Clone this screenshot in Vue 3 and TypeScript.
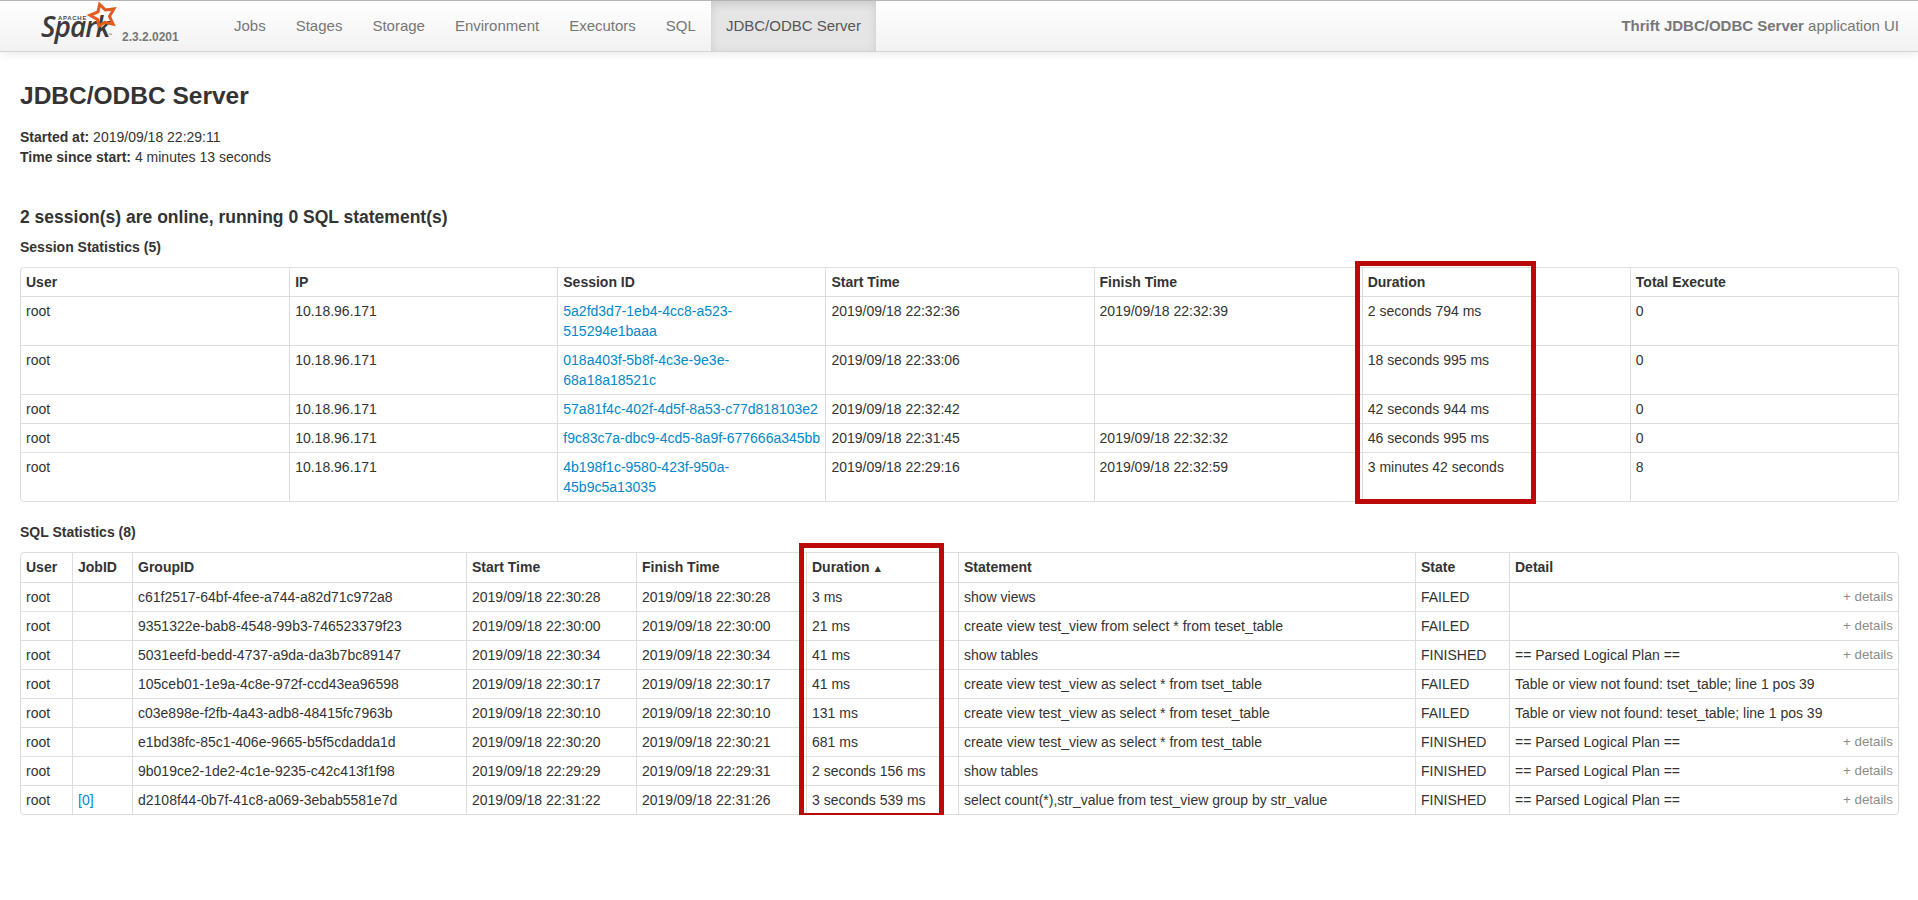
<script setup lang="ts">
interface SessionRow { user: string; ip: string; id: string; start: string; finish: string; duration: string; total: string }
interface SqlRow { user: string; job: string; group: string; start: string; finish: string; duration: string; statement: string; state: string; detail: string; more: boolean }

const navItems: string[] = ['Jobs', 'Stages', 'Storage', 'Environment', 'Executors', 'SQL']

const sessions: SessionRow[] = [
  { user: 'root', ip: '10.18.96.171', id: '5a2fd3d7-1eb4-4cc8-a523-515294e1baaa', start: '2019/09/18 22:32:36', finish: '2019/09/18 22:32:39', duration: '2 seconds 794 ms', total: '0' },
  { user: 'root', ip: '10.18.96.171', id: '018a403f-5b8f-4c3e-9e3e-68a18a18521c', start: '2019/09/18 22:33:06', finish: '', duration: '18 seconds 995 ms', total: '0' },
  { user: 'root', ip: '10.18.96.171', id: '57a81f4c-402f-4d5f-8a53-c77d818103e2', start: '2019/09/18 22:32:42', finish: '', duration: '42 seconds 944 ms', total: '0' },
  { user: 'root', ip: '10.18.96.171', id: 'f9c83c7a-dbc9-4cd5-8a9f-677666a345bb', start: '2019/09/18 22:31:45', finish: '2019/09/18 22:32:32', duration: '46 seconds 995 ms', total: '0' },
  { user: 'root', ip: '10.18.96.171', id: '4b198f1c-9580-423f-950a-45b9c5a13035', start: '2019/09/18 22:29:16', finish: '2019/09/18 22:32:59', duration: '3 minutes 42 seconds', total: '8' }
]

const plan = '== Parsed Logical Plan =='
const sqlRows: SqlRow[] = [
  { user: 'root', job: '', group: 'c61f2517-64bf-4fee-a744-a82d71c972a8', start: '2019/09/18 22:30:28', finish: '2019/09/18 22:30:28', duration: '3 ms', statement: 'show views', state: 'FAILED', detail: '', more: true },
  { user: 'root', job: '', group: '9351322e-bab8-4548-99b3-746523379f23', start: '2019/09/18 22:30:00', finish: '2019/09/18 22:30:00', duration: '21 ms', statement: 'create view test_view from select * from teset_table', state: 'FAILED', detail: '', more: true },
  { user: 'root', job: '', group: '5031eefd-bedd-4737-a9da-da3b7bc89147', start: '2019/09/18 22:30:34', finish: '2019/09/18 22:30:34', duration: '41 ms', statement: 'show tables', state: 'FINISHED', detail: plan, more: true },
  { user: 'root', job: '', group: '105ceb01-1e9a-4c8e-972f-ccd43ea96598', start: '2019/09/18 22:30:17', finish: '2019/09/18 22:30:17', duration: '41 ms', statement: 'create view test_view as select * from tset_table', state: 'FAILED', detail: 'Table or view not found: tset_table; line 1 pos 39', more: false },
  { user: 'root', job: '', group: 'c03e898e-f2fb-4a43-adb8-48415fc7963b', start: '2019/09/18 22:30:10', finish: '2019/09/18 22:30:10', duration: '131 ms', statement: 'create view test_view as select * from teset_table', state: 'FAILED', detail: 'Table or view not found: teset_table; line 1 pos 39', more: false },
  { user: 'root', job: '', group: 'e1bd38fc-85c1-406e-9665-b5f5cdadda1d', start: '2019/09/18 22:30:20', finish: '2019/09/18 22:30:21', duration: '681 ms', statement: 'create view test_view as select * from test_table', state: 'FINISHED', detail: plan, more: true },
  { user: 'root', job: '', group: '9b019ce2-1de2-4c1e-9235-c42c413f1f98', start: '2019/09/18 22:29:29', finish: '2019/09/18 22:29:31', duration: '2 seconds 156 ms', statement: 'show tables', state: 'FINISHED', detail: plan, more: true },
  { user: 'root', job: '[0]', group: 'd2108f44-0b7f-41c8-a069-3ebab5581e7d', start: '2019/09/18 22:31:22', finish: '2019/09/18 22:31:26', duration: '3 seconds 539 ms', statement: 'select count(*),str_value from test_view group by str_value', state: 'FINISHED', detail: plan, more: true }
]
</script>

<template>
  <div class="page">
    <header class="navbar">
      <div class="brand">
        <div class="logo">
          <span class="spark">Spark</span>
          <span class="apache">APACHE</span>
          <svg class="star" width="34" height="32" viewBox="0 0 34 32">
            <path d="M13.6 3.4 L19.3 8.9 L27.9 7.9 L23.5 15.3 L27.1 23.2 L18.7 21.3 L12.8 25 L11.5 18.5 L4 14.3 L12 10.9 Z" fill="none" stroke="#e25a1c" stroke-width="3" stroke-linejoin="miter" />
          </svg>
          <span class="tm">™</span>
        </div>
        <span class="version">2.3.2.0201</span>
      </div>
      <nav class="nav">
        <a v-for="item in navItems" :key="item" class="nav-link">{{ item }}</a>
        <a class="nav-link active">JDBC/ODBC Server</a>
      </nav>
      <p class="app-name"><strong>Thrift JDBC/ODBC Server</strong> application UI</p>
    </header>

    <main class="content">
      <h3 class="title">JDBC/ODBC Server</h3>
      <ul class="facts">
        <li><strong>Started at:</strong> 2019/09/18 22:29:11</li>
        <li><strong>Time since start:</strong> 4 minutes 13 seconds</li>
      </ul>

      <h4 class="online">2 session(s) are online, running 0 SQL statement(s)</h4>

      <h5 class="section">Session Statistics (5)</h5>
      <div class="table-wrap">
        <table class="grid fixed">
          <thead>
            <tr>
              <th>User</th><th>IP</th><th>Session ID</th><th>Start Time</th><th>Finish Time</th><th>Duration</th><th>Total Execute</th>
            </tr>
          </thead>
          <tbody>
            <tr v-for="row in sessions" :key="row.id">
              <td>{{ row.user }}</td>
              <td>{{ row.ip }}</td>
              <td><a class="link">{{ row.id }}</a></td>
              <td>{{ row.start }}</td>
              <td>{{ row.finish }}</td>
              <td>{{ row.duration }}</td>
              <td>{{ row.total }}</td>
            </tr>
          </tbody>
        </table>
        <div class="marker marker-session"></div>
      </div>

      <h5 class="section sql">SQL Statistics (8)</h5>
      <div class="table-wrap">
        <table class="grid fixed">
          <colgroup>
            <col class="c-user" /><col class="c-job" /><col class="c-group" /><col class="c-time" /><col class="c-time2" /><col class="c-dur" /><col class="c-stmt" /><col class="c-state" /><col />
          </colgroup>
          <thead>
            <tr>
              <th>User</th><th>JobID</th><th>GroupID</th><th>Start Time</th><th>Finish Time</th>
              <th>Duration <span class="sort">▴</span></th>
              <th>Statement</th><th>State</th><th>Detail</th>
            </tr>
          </thead>
          <tbody>
            <tr v-for="row in sqlRows" :key="row.group">
              <td>{{ row.user }}</td>
              <td><a v-if="row.job" class="link">{{ row.job }}</a></td>
              <td>{{ row.group }}</td>
              <td>{{ row.start }}</td>
              <td>{{ row.finish }}</td>
              <td>{{ row.duration }}</td>
              <td>{{ row.statement }}</td>
              <td>{{ row.state }}</td>
              <td>
                <span v-if="row.more" class="details">+ details</span>{{ row.detail }}
              </td>
            </tr>
          </tbody>
        </table>
        <div class="marker marker-sql"></div>
      </div>
    </main>
  </div>
</template>

<style>
html, body { background: #fff; }
</style>

<style scoped>
.page {
  font-family: "Liberation Sans", Arial, sans-serif;
  font-size: 14px;
  line-height: 20px;
  color: #333;
}
.navbar {
  display: flex;
  align-items: stretch;
  height: 50px;
  background: linear-gradient(to bottom, #fff, #f2f2f2);
  border-top: 1px solid #b5b5b5;
  border-bottom: 1px solid #d4d4d4;
  box-shadow: 0 1px 10px rgba(0, 0, 0, 0.1);
}
.brand {
  display: flex;
  width: 219px;
  flex: none;
  padding-left: 40px;
  box-sizing: border-box;
}
.logo {
  position: relative;
  width: 80px;
  height: 50px;
  flex: none;
}
.star { position: absolute; left: 46px; top: 0; }
.apache {
  position: absolute;
  left: 18px;
  top: 14px;
  font-size: 6px;
  line-height: 7px;
  font-weight: 700;
  letter-spacing: 0.7px;
  color: #4a4a4a;
}
.spark {
  position: absolute;
  left: 1px;
  top: 14px;
  font-family: "Open Sans", sans-serif;
  font-size: 28px;
  line-height: 22px;
  font-weight: 600;
  font-style: italic;
  letter-spacing: -1px;
  color: #3c3a3a;
}
.tm {
  position: absolute;
  left: 68px;
  top: 31px;
  font-size: 4px;
  line-height: 5px;
  color: #555;
}
.version {
  margin: 26px 0 0 2px;
  font-size: 12px;
  font-weight: 700;
  color: #777;
}
.nav { display: flex; }
.nav-link {
  padding: 0 15px;
  font-size: 15px;
  line-height: 50px;
  color: #777;
}
.nav-link.active {
  color: #555;
  background: #e5e5e5;
  box-shadow: inset 0 3px 8px rgba(0, 0, 0, 0.125);
}
.app-name {
  margin: 0 19px 0 auto;
  font-size: 15px;
  line-height: 50px;
  color: #777;
}
.content { padding: 0 19px 0 20px; }
.title {
  margin: 24px 0 11px;
  font-size: 24.5px;
  line-height: 40px;
  font-weight: 700;
}
.facts { list-style: none; margin: 0; padding: 0; }
.online {
  margin: 40px 0 10px;
  font-size: 17.5px;
  line-height: 20px;
  font-weight: 700;
}
.section {
  margin: 0 0 10px;
  font-size: 14px;
  line-height: 20px;
  font-weight: 700;
}
.section.sql { margin-top: 20px; }
.table-wrap { position: relative; }
.grid {
  width: 100%;
  border-collapse: separate;
  border-spacing: 0;
  border: 1px solid #ddd;
  border-radius: 4px;
}
.fixed { table-layout: fixed; }
.grid th, .grid td {
  padding: 4px 5px;
  text-align: left;
  vertical-align: top;
  border-top: 1px solid #ddd;
  border-left: 1px solid #ddd;
}
.grid thead th { border-top: 0; font-weight: 700; }
.grid th:first-child, .grid td:first-child { border-left: 0; }
.c-user { width: 51px; }
.c-job { width: 60px; }
.c-group { width: 334px; }
.c-time { width: 170px; }
.c-time2 { width: 170px; }
.c-dur { width: 152px; }
.c-stmt { width: 457px; }
.c-state { width: 94px; }
.link { color: #0088cc; }
.sort { font-size: 11px; margin-left: 2px; }
.details {
  float: right;
  font-size: 13.33px;
  color: #8c8c8c;
}
.marker {
  position: absolute;
  border: 5px solid #bb0808;
  box-sizing: border-box;
  pointer-events: none;
}
.marker-session { left: 1335px; top: -6px; width: 181px; height: 243px; }
.marker-sql { left: 779px; top: -9px; width: 145px; height: 275px; }
</style>
